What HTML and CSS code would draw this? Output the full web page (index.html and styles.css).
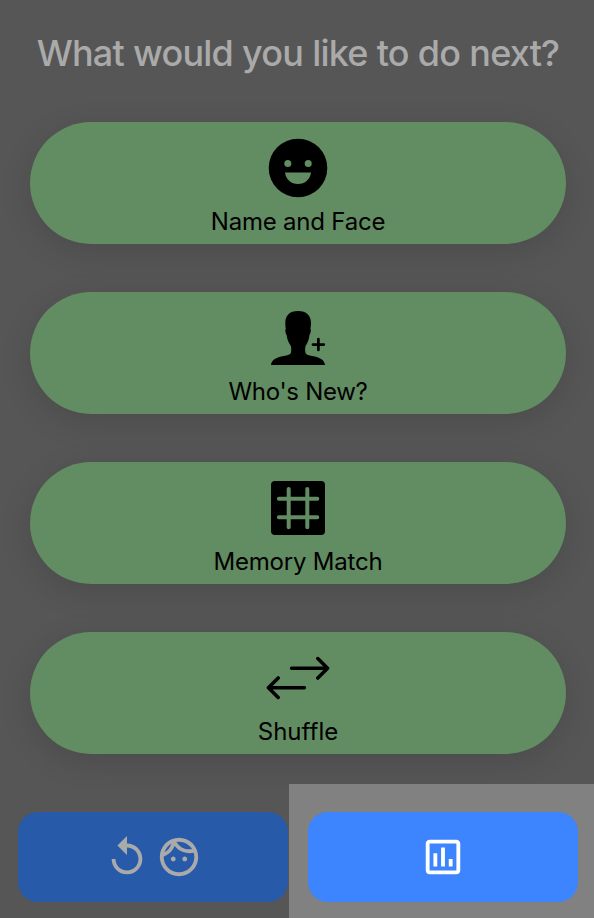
FILE: index.html
```html
<!DOCTYPE html>
<html lang="en">
<head>
<meta charset="utf-8">
<title>What next</title>
<link rel="stylesheet" href="styles.css">
</head>
<body>
<main class="screen">
  <h1 class="title">What would you like to do next?</h1>
  <nav class="choices">
    <button class="choice">
      <svg class="choice-icon" viewBox="0 0 64 64"><circle cx="32" cy="32" r="29.3"/><g class="cutout"><circle cx="21.8" cy="27.6" r="3.5"/><circle cx="42.2" cy="27.6" r="3.5"/><path d="M19 36.4h26C44.300 43 39 48 32 48S19.700 43 19 36.400z"/></g></svg>
      <span class="label name">Name and Face</span>
    </button>
    <button class="choice">
      <svg class="choice-icon" viewBox="0 0 64 64"><path d="M32 5C23.500 5 19.300 9.500 19.300 17c0 2.300.1 4 .5 5.500-.8 1-.6 4.500.8 6.500.5 4.500 1.900 7.500 4 10.500.9 2 .9 5.500.1 8-1.500 1.800-4.700 2-8.200 2.700C9.500 51.700 5.500 54 5 59h54c-.5-5-4.500-7.300-11.500-8.800-3.500-.7-6.700-.9-7.800-2.700-.8-2.500-.8-6 .1-8 2-3 3.200-6 3.700-10.500 1.400-2 1.700-5.500.9-6.500.4-1.500.6-3.200.6-5.500C45 9.500 40.500 5 32 5z"/><path class="plus" d="M52.400 33.200v10.800M47 38.600h10.800"/></svg>
      <span class="label who">Who's New?</span>
    </button>
    <button class="choice">
      <svg class="choice-icon" viewBox="0 0 64 64"><rect x="5" y="5" width="54" height="54" rx="4"/><path class="grid" d="M22.700 12.900v38.400M41.300 12.900v38.400M12.900 22.700h38.400M12.900 41.300h38.400"/></svg>
      <span class="label memory">Memory Match</span>
    </button>
    <button class="choice">
      <svg class="choice-icon" viewBox="0 0 64 64"><path class="arrows" d="M25.600 22.300h36M51.800 12.500l9.800 9.800-9.800 9.800M38.400 41.700h-36M12.200 31.900l-9.800 9.800 9.800 9.800"/></svg>
      <span class="label shuffle">Shuffle</span>
    </button>
  </nav>
  <footer class="actions">
    <div class="cell">
      <button class="action dimmed" aria-label="Play again">
        <svg class="action-icon" viewBox="0 0 24 24"><path d="M12 5V1L7 6l5 5V7c3.310 0 6 2.690 6 6s-2.690 6-6 6-6-2.690-6-6H4c0 4.420 3.580 8 8 8s8-3.580 8-8-3.580-8-8-8z"/></svg>
        <svg class="action-icon" viewBox="0 0 24 24"><path d="M10.250 13c0 .69-.56 1.250-1.250 1.250S7.750 13.690 7.750 13s.56-1.250 1.250-1.250 1.250.56 1.250 1.250zM15 11.750c-.69 0-1.250.56-1.250 1.250s.56 1.250 1.250 1.250 1.250-.56 1.250-1.250-.56-1.250-1.250-1.250zm7 .25c0 5.520-4.480 10-10 10S2 17.520 2 12 6.480 2 12 2s10 4.480 10 10zM10.660 4.120C12.060 6.440 14.600 8 17.500 8c.46 0 .91-.05 1.340-.12C17.440 5.560 14.900 4 12 4c-.46 0-.91.05-1.340.12zM4.420 9.470c1.710-.97 3.030-2.550 3.660-4.440C6.370 6 5.050 7.580 4.420 9.470zM20 12c0-.78-.12-1.530-.33-2.240-.7.15-1.420.24-2.170.24-3.130 0-5.920-1.440-7.760-3.690C8.690 8.870 6.600 10.880 4 11.860c.01.04 0 .09 0 .14 0 4.410 3.590 8 8 8s8-3.590 8-8z"/></svg>
      </button>
    </div>
    <div class="cell highlighted">
      <button class="action" aria-label="Statistics">
        <svg class="action-icon" viewBox="0 0 24 24"><path d="M19 3H5c-1.100 0-2 .9-2 2v14c0 1.100.9 2 2 2h14c1.100 0 2-.9 2-2V5c0-1.100-.9-2-2-2zm0 16H5V5h14v14zM7 10h2v7H7zM11 7h2v10h-2zM15 13h2v4h-2z"/></svg>
      </button>
    </div>
  </footer>
</main>
</body>
</html>
```
FILE: styles.css
```css
* { box-sizing: border-box; }

body {
  margin: 0;
  background: #565656;
  font-family: Inter, "Liberation Sans", sans-serif;
}

button {
  border: 0;
  padding: 0;
  font: inherit;
}

.screen {
  display: flex;
  flex-direction: column;
  height: 918px;
  overflow: hidden;
}

.title {
  margin: 0;
  padding: 31px 0 0 2px;
  height: 122px;
  font-size: 36px;
  line-height: 44px;
  font-weight: 500;
  letter-spacing: -0.78px;
  word-spacing: 0.2px;
  text-align: center;
  white-space: nowrap;
  color: #aaa;
}

.choices {
  display: flex;
  flex-direction: column;
  gap: 48px;
  height: 662px;
  padding: 0 28px 0 30px;
}

.choice {
  display: flex;
  flex-direction: column;
  align-items: center;
  height: 122px;
  padding-top: 14px;
  border-radius: 61px;
  background: #628c62;
  color: #000;
  box-shadow: 0 8px 32px rgba(0, 0, 0, 0.12);
}

.choice-icon { width: 64px; height: 64px; flex: none; }
.cutout { fill: #628c62; }
.plus, .grid, .arrows { fill: none; stroke: #000; stroke-linecap: round; }
.plus { stroke-width: 2.7; }
.grid { stroke: #628c62; stroke-width: 4; }
.arrows { stroke-width: 3.5; stroke-linejoin: round; }

.label {
  margin-top: 7px;
  font-size: 24px;
  line-height: 30px;
  white-space: nowrap;
}

.name { letter-spacing: -0.22px; }
.who { letter-spacing: -0.3px; }
.memory { letter-spacing: -0.2px; }

.actions {
  display: grid;
  grid-template-columns: 289px 305px;
  height: 134px;
}

.cell { padding: 28px 0 0 18px; }
.highlighted { padding-left: 19px; background: #818181; }

.action {
  display: flex;
  align-items: center;
  justify-content: center;
  gap: 6px;
  width: 270px;
  height: 90px;
  border-radius: 20px;
  background: #3d84ff;
  color: #fff;
}

.dimmed { background: #285aaa; color: #aaa; }
.action-icon { width: 46px; height: 46px; fill: currentColor; }
```
